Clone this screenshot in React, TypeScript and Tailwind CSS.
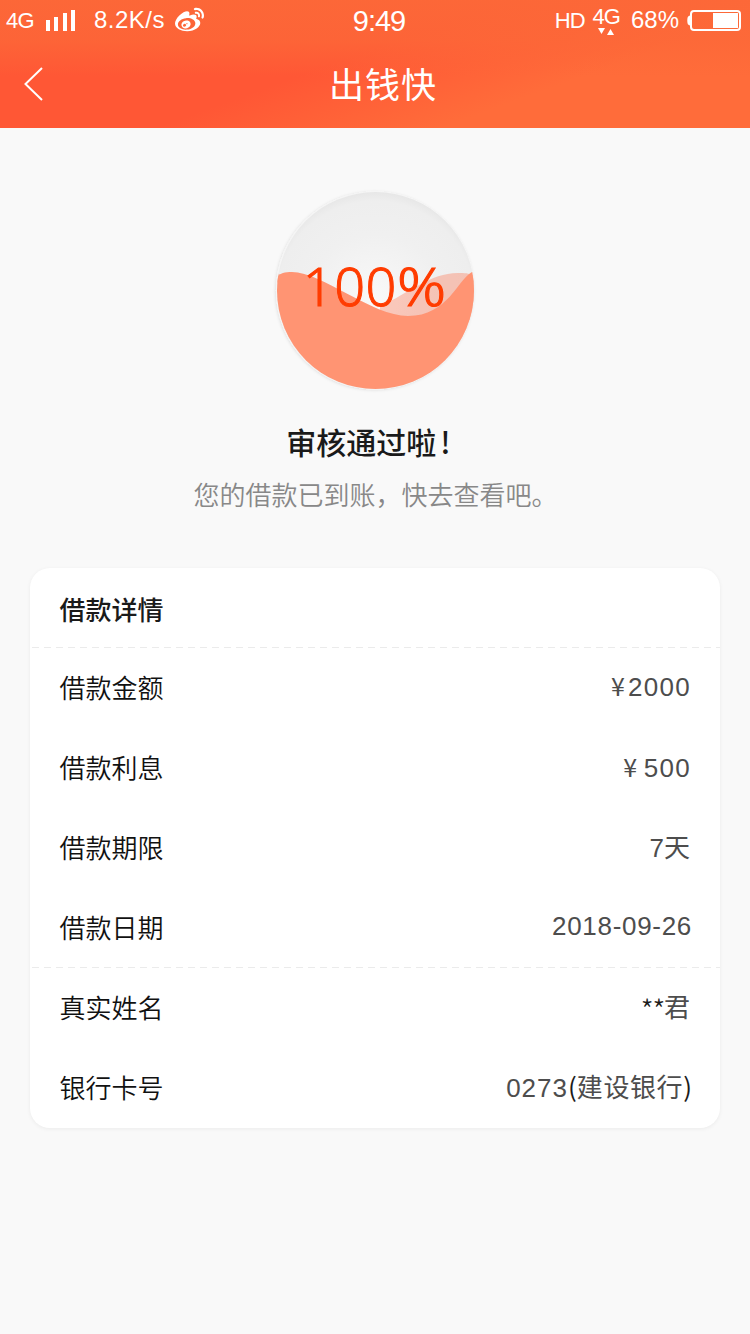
import React from 'react';
import { FaWeibo } from 'react-icons/fa';

interface DetailRow {
  label: string;
  value: React.ReactNode;
  valueClass: string;
}

const Yen: React.FC = () => (
  <span className="font-['Noto_Sans_CJK_SC',sans-serif] text-[25px] leading-none tracking-[3px]">¥</span>
);

const loanRows: DetailRow[] = [
  { label: '借款金额', value: <><Yen />2000</>, valueClass: 'tracking-[1.3px] pb-[3px] -mr-[1px]' },
  { label: '借款利息', value: <><Yen /> 500</>, valueClass: 'tracking-[1.3px] [word-spacing:-5px] pb-px -mr-[1px]' },
  { label: '借款期限', value: '7天', valueClass: '' },
  { label: '借款日期', value: '2018-09-26', valueClass: 'tracking-[0.7px] pb-1 -mr-[2px]' },
];

const accountRows: DetailRow[] = [
  {
    label: '真实姓名',
    value: (
      <>
        <span className="relative top-[5px] font-['Noto_Sans_CJK_SC',sans-serif] text-[30px] leading-none font-light tracking-[-1.500px] text-[#1a1a1a]">
          **
        </span>
        君
      </>
    ),
    valueClass: '',
  },
  {
    label: '银行卡号',
    value: (
      <>
        <span className="tracking-[1px]">0273</span>
        <span className="font-['Noto_Sans_CJK_SC',sans-serif] text-[#1a1a1a]">(</span>
        <span className="tracking-[0.6px]">建设银行</span>
        <span className="font-['Noto_Sans_CJK_SC',sans-serif] text-[#1a1a1a]">)</span>
      </>
    ),
    valueClass: 'pb-[2px] -mr-[2px]',
  },
];

const Battery: React.FC = () => (
  <svg className="block w-[54px] h-[21px]" viewBox="0 0 54 21" fill="none">
    <rect x="4" y="1" width="49" height="19" rx="3" stroke="white" strokeWidth="2" />
    <path d="M3 5.500 C1 6 .3 7 .3 10.500 C.3 14 1 15 3 15.500Z" fill="white" />
    <rect x="26" y="3" width="25" height="15" fill="white" />
  </svg>
);

const StatusBar: React.FC = () => (
  <div className="grid grid-cols-[1fr_auto_1fr] items-center h-10 pl-1.5 pr-[9px] font-['Liberation_Sans',sans-serif]">
    <div className="flex items-center pb-px">
      <span className="w-[30px] text-[22px] tracking-[-0.8px]">4G</span>
      <svg className="ml-2.5 w-[30px] h-[22px]" viewBox="0 0 30 22" fill="white">
        <rect x="0" y="11" width="4" height="11" />
        <rect x="8" y="8" width="4" height="14" />
        <rect x="17" y="4" width="4" height="18" />
        <rect x="25" y="1" width="4" height="21" />
      </svg>
      <span className="ml-[18px] w-[74px] text-[24px] tracking-[0.5px]">8.2K/s</span>
      <FaWeibo className="ml-[7px] w-[29px] h-[29px]" />
    </div>
    <span className="pl-[11px] pt-px text-[29px] leading-10 tracking-[-1px]">9:49</span>
    <div className="flex items-center justify-end pb-px">
      <span className="text-[22px] tracking-[-1px]">HD</span>
      <div className="ml-2 flex flex-col items-center">
        <span className="text-[22px] leading-[22px] tracking-[-1px]">4G</span>
        <svg className="w-[16px] h-[7px]" viewBox="0 0 16 7" fill="white">
          <path d="M0 0H7L3.500 6Z" />
          <path d="M9 7H16L12.500 1Z" />
        </svg>
      </div>
      <span className="ml-[11px] mr-2 text-[24px]">68%</span>
      <Battery />
    </div>
  </div>
);

const ProgressBall: React.FC = () => (
  <div className="relative w-[210px] h-[210px] flex items-center justify-center">
    <svg className="absolute inset-0 w-full h-full" viewBox="0 0 210 210">
      <defs>
        <radialGradient id="ball" cx="105" cy="115" r="110" gradientUnits="userSpaceOnUse">
          <stop offset="0" stopColor="#f9f9f9" />
          <stop offset="0.6" stopColor="#f0f0f0" />
          <stop offset="0.9" stopColor="#eeeeee" />
          <stop offset="1" stopColor="#e5e5e5" />
        </radialGradient>
        <clipPath id="ballClip">
          <circle cx="105.500" cy="105.500" r="98.500" />
        </clipPath>
        <filter id="ballShadow" x="-10%" y="-10%" width="120%" height="120%">
          <feDropShadow dx="-0.5" dy="0.5" stdDeviation="1.500" floodColor="#000000" floodOpacity="0.12" />
        </filter>
      </defs>
      <circle cx="105" cy="105.500" r="99" fill="#f6f6f6" filter="url(#ballShadow)" />
      <circle cx="105.500" cy="105.500" r="98.500" fill="url(#ball)" />
      <g clipPath="url(#ballClip)">
        {/* back wave */}
        <path
          d="M110 121C140 108 160 88 188 88C195 88 200 88 206 92V135H110Z"
          fill="#ff5a30"
          fillOpacity="0.3"
        />
        <path d="M6 88L12 90L6 100Z" fill="#ff5a30" fillOpacity="0.3" />
        {/* front wave */}
        <path
          d="M6 94C9 88 14 87 22 87C52 87 102 131 138 131C178 131 188 94 202 87H210V210H0V94Z"
          fill="#ff9473"
        />
      </g>
    </svg>
    <span className="relative -top-[5px] -left-[3px] flex font-['Noto_Sans',sans-serif] font-light text-[54px] leading-[72px] tracking-[0.5px] text-[#ff3c00] [-webkit-text-stroke:1px_#ff3c00]">
      <span>100</span>
      <span className="inline-block origin-left scale-x-[1.12]">%</span>
    </span>
  </div>
);

const Row: React.FC<{ row: DetailRow }> = ({ row }) => (
  <div className="h-20 px-[30px] flex items-center justify-between text-[26px] leading-10">
    <span className="-ml-[0.5px] pb-0.5 font-[350] text-[#111111]">{row.label}</span>
    <span className={`font-['Liberation_Sans','Noto_Sans_CJK_SC',sans-serif] text-[#4d4d4d] ${row.valueClass}`}>
      {row.value}
    </span>
  </div>
);

const Divider: React.FC = () => (
  <div className="h-px -mt-px ml-[2px] bg-[repeating-linear-gradient(90deg,#ebebeb_0_7px,transparent_7px_12px)]" />
);

const App: React.FC = () => {
  return (
    <div className="w-[750px] h-[1334px] overflow-hidden bg-[#f9f9f9] font-['Noto_Sans_CJK_SC',sans-serif]">
      {/* Header */}
      <header className="h-32 text-white bg-[linear-gradient(180deg,rgba(252,104,56,0.95)_0%,rgba(252,104,56,0.75)_32%,rgba(255,90,50,0)_60%),linear-gradient(160deg,#ff5735_46%,#ff6c3a_72%)]">
        <StatusBar />
        <div className="h-[88px] px-6 grid grid-cols-[1fr_auto_1fr] items-center">
          <svg className="w-[19px] h-[34px]" viewBox="0 0 19 34" fill="none" stroke="white" strokeWidth="2">
            <path d="M18 1L1.500 17L18 33" />
          </svg>
          <h1 className="text-[35px] leading-[50px] font-normal tracking-[1px] pl-4 pb-[2px]">出钱快</h1>
        </div>
      </header>

      {/* Result */}
      <section className="pt-[57px] flex flex-col items-center">
        <ProgressBall />
        <h2 className="mt-[25px] pr-[13px] text-[30px] leading-[42px] font-medium text-[#1a1a1a]">
          审核通过啦<span className="pl-1">!</span>
        </h2>
        <p className="mt-[12px] pl-px text-[26px] leading-10 font-[350] text-[#888888]">您的借款已到账，快去查看吧。</p>
      </section>

      {/* Loan details */}
      <section className="mx-[30px] mt-[54px] h-[560px] bg-white rounded-[20px] shadow-[0_1px_4px_rgba(0,0,0,0.06)]">
        <h3 className="h-20 px-[29.5px] pt-px flex items-center text-[26px] font-medium text-[#1a1a1a]">借款详情</h3>
        <Divider />
        {loanRows.map((row) => (
          <Row key={row.label} row={row} />
        ))}
        <Divider />
        {accountRows.map((row) => (
          <Row key={row.label} row={row} />
        ))}
      </section>
    </div>
  );
};

export default App;
